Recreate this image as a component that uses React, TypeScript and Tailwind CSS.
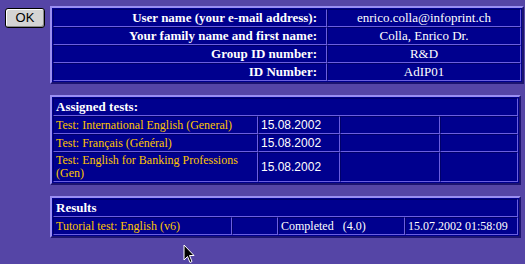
const cell =
  'border border-t-[#00006a] border-l-[#00006a] border-b-[#6b5fe0] border-r-[#6b5fe0]'

function Panel({ className, children }: { className: string; children: React.ReactNode }) {
  return (
    <div
      className={`border-2 border-t-[#9a8ef2] border-l-[#9a8ef2] border-b-[#1c1470] border-r-[#1c1470] bg-[#00008e] p-px ${className}`}
    >
      {children}
    </div>
  )
}

const userRows = [
  ['User name (your e-mail address):', 'enrico.colla@infoprint.ch'],
  ['Your family name and first name:', 'Colla, Enrico Dr.'],
  ['Group ID number:', 'R&D'],
  ['ID Number:', 'AdIP01'],
]

const tests = [
  { name: 'Test: International English (General)', date: '15.08.2002', tall: false },
  { name: 'Test: Français (Général)', date: '15.08.2002', tall: false },
  { name: 'Test: English for Banking Professions (Gen)', date: '15.08.2002', tall: true },
]

export default function App() {
  return (
    <div
      className="relative flex h-[264px] w-[525px] items-start bg-[#5545a6] text-[13px] leading-[16px] text-white"
      style={{ fontFamily: '"Liberation Serif", serif' }}
    >
      <button className="ml-[5px] mt-[8px] flex h-[20px] w-[40px] items-center justify-center rounded-[3px] border border-black bg-[#d4d4d4] font-['Liberation_Sans',sans-serif] text-[13px] text-black shadow-[inset_1px_1px_0_#ffffff,inset_-1px_-1px_0_#8a8a8a]">
        OK
      </button>

      <div className="ml-[5px] mt-[6px] flex flex-col">
        <Panel className="w-[474px]">
          {userRows.map(([label, value]) => (
            <div key={label} className="grid grid-cols-[274px_1fr]">
              <div className={`${cell} flex h-[18px] items-center justify-end pr-[9px] font-bold`}>
                {label}
              </div>
              <div className={`${cell} flex h-[18px] items-center justify-center`}>{value}</div>
            </div>
          ))}
        </Panel>

        <Panel className="mt-[11px] w-[471px]">
          <div className={`${cell} flex h-[18px] items-center pl-[2px] font-bold`}>Assigned tests:</div>
          {tests.map((t) => (
            <div key={t.name} className="grid grid-cols-[205px_82px_100px_1fr]">
              <div
                className={`${cell} flex ${t.tall ? 'h-[30px]' : 'h-[18px]'} items-center pl-[2px] text-[12px] leading-[13px] text-[#ffc400]`}
              >
                {t.name}
              </div>
              <div
                className={`${cell} flex items-center pl-[2px] font-['Liberation_Sans',sans-serif] text-[12px]`}
              >
                {t.date}
              </div>
              <div className={cell} />
              <div className={cell} />
            </div>
          ))}
        </Panel>

        <Panel className="mt-[11px] w-[471px]">
          <div className={`${cell} flex h-[18px] items-center pl-[2px] font-bold`}>Results</div>
          <div className="grid grid-cols-[179px_46px_127px_1fr]">
            <div className={`${cell} flex h-[18px] items-center pl-[2px] text-[12px] text-[#ffc400]`}>
              Tutorial test: English (v6)
            </div>
            <div className={cell} />
            <div className={`${cell} flex items-center whitespace-pre pl-[2px] text-[12px]`}>
              {'Completed   (4.0)'}
            </div>
            <div className={`${cell} flex items-center pl-[2px] text-[12px]`}>15.07.2002 01:58:09</div>
          </div>
        </Panel>
      </div>

      <svg className="absolute left-[183px] top-[244px]" width="13" height="20" viewBox="0 0 13 20">
        <path d="M1 1 L1 16 L4.5 12.5 L7 18.5 L9 17.5 L6.5 11.5 L11 11.5 Z" fill="#000" stroke="#fff" strokeWidth="1" />
      </svg>
    </div>
  )
}
